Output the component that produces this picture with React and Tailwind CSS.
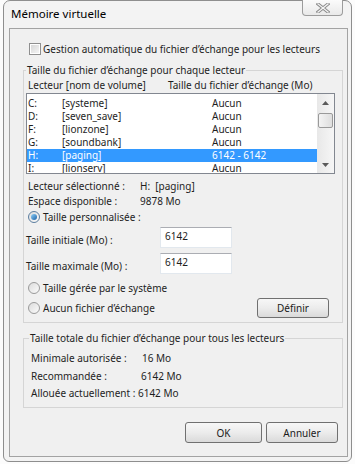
import React from 'react';

const drives = [
    { letter: 'C:', name: '[systeme]', size: 'Aucun' },
    { letter: 'D:', name: '[seven_save]', size: 'Aucun' },
    { letter: 'F:', name: '[lionzone]', size: 'Aucun' },
    { letter: 'G:', name: '[soundbank]', size: 'Aucun' },
    { letter: 'H:', name: '[paging]', size: '6142 - 6142', selected: true },
    { letter: 'I:', name: '[lionserv]', size: 'Aucun' },
];

function CloseButton() {
    return (
        <div className="-mt-[1px] mr-[5px] w-[41px] h-[16px] rounded-b-[4px] border border-t-0 border-[#9c9c9c] bg-gradient-to-b from-[#fbfbfb] to-[#e9e9e9] flex items-center justify-center">
            <svg width="14" height="10" viewBox="0 0 14 10">
                <path d="M2 1 L12 9 M12 1 L2 9" stroke="#8a8a8a" strokeWidth="3.2" strokeLinecap="square" />
                <path d="M2 1 L12 9 M12 1 L2 9" stroke="#f4f4f4" strokeWidth="1.3" strokeLinecap="square" />
            </svg>
        </div>
    );
}

function Checkbox() {
    return (
        <div className="w-[12px] h-[12px] border border-[#8f8f8f] bg-white p-[1px]">
            <div className="w-full h-full bg-gradient-to-br from-[#d8d8d8] to-[#f4f4f4]" />
        </div>
    );
}

function Radio({ checked }) {
    return (
        <div className={`w-[12px] h-[12px] rounded-full border ${checked ? 'border-[#5c7ea0]' : 'border-[#9a9a9a]'} bg-gradient-to-br from-[#dcdcdc] to-[#fbfbfb] flex items-center justify-center`}>
            {checked && <div className="w-[6px] h-[6px] rounded-full bg-gradient-to-br from-[#8fd0f7] to-[#1a63a8]" />}
        </div>
    );
}

function Button({ children, width }) {
    return (
        <div className={`${width} h-full border border-[#707070] rounded-[3px] bg-gradient-to-b from-[#f7f7f7] via-[#ececec] to-[#dadada] flex items-center justify-center text-[#1a1a1a]`}>
            {children}
        </div>
    );
}

function Scrollbar() {
    return (
        <div className="w-[17px] h-full bg-gradient-to-r from-[#e8e8e8] to-[#f6f6f6] flex flex-col items-center">
            <div className="h-[17px] w-full flex items-center justify-center">
                <svg width="7" height="4" viewBox="0 0 7 4"><path d="M0 4 L3.5 0 L7 4 Z" fill="#5a5a5a" /></svg>
            </div>
            <div className="mt-[2px] w-[15px] h-[15px] border border-[#9a9a9a] rounded-[2px] bg-gradient-to-r from-[#f4f4f4] to-[#dedede]" />
            <div className="flex-1" />
            <div className="h-[17px] w-full flex items-center justify-center">
                <svg width="7" height="4" viewBox="0 0 7 4"><path d="M0 0 L7 0 L3.5 4 Z" fill="#5a5a5a" /></svg>
            </div>
        </div>
    );
}

function Field({ label, value }) {
    return (
        <div className="flex items-center h-[21px] pl-[2px]">
            <span className="w-[134px] pt-[5px]">{label}</span>
            <div className="w-[72px] h-[21px] bg-white border border-[#e2e8ee] border-t-[#abadb3] pl-[4px] leading-[16px]">
                {value}
            </div>
        </div>
    );
}

export default function App() {
    return (
        <div className="w-[355px] h-[464px] bg-[#fcfcfc] overflow-hidden font-['Noto_Sans',sans-serif] text-[10px] leading-[14px] text-[#1e1e1e]">
            <div className="ml-[3px] w-[349px] h-[462px] border border-[#8e8e8e] rounded-t-[7px] rounded-b-[6px] bg-[#f3f3f3] pl-[5px] pr-[3px] pb-[4px] flex flex-col">
                {/* title bar */}
                <div className="h-[27px] flex justify-between items-start">
                    <span className="mt-[6px] pl-[2px] text-[11.5px] text-black">Mémoire virtuelle</span>
                    <CloseButton />
                </div>

                {/* client area */}
                <div className="flex-1 border border-[#a3a3a3] bg-[#f0f0f0] flex flex-col">
                    <div className="mt-[13px] ml-[19px] h-[14px] flex items-center gap-[2px]">
                        <Checkbox />
                        <span>Gestion automatique du fichier d’échange pour les lecteurs</span>
                    </div>

                    <fieldset className="mt-[7px] ml-[13px] w-[320px] border border-[#d5d5d5] pb-[4px]">
                        <legend className="ml-[2px] px-[1px]">Taille du fichier d’échange pour chaque lecteur</legend>
                        <div className="mt-[1px] h-[14px] pl-[4px] flex">
                            <span className="w-[140px]">Lecteur [nom de volume]</span>
                            <span>Taille du fichier d’échange (Mo)</span>
                        </div>
                        <div className="mt-[1px] ml-[2px] w-[309px] h-[81px] border border-[#828790] bg-white flex overflow-hidden">
                            <div className="flex-1 pt-[3px]">
                                {drives.map((d) => (
                                    <div key={d.letter} className={`h-[13px] leading-[13px] flex pl-[1px] ${d.selected ? 'bg-[#3399ff] text-white' : ''}`}>
                                        <span className="w-[34px]">{d.letter}</span>
                                        <span className="w-[150px]">{d.name}</span>
                                        <span>{d.size}</span>
                                    </div>
                                ))}
                            </div>
                            <Scrollbar />
                        </div>

                        <div className="mt-[5px] h-[14px] pl-[4px] flex">
                            <span className="w-[112px]">Lecteur sélectionné :</span>
                            <span>H:&nbsp;&nbsp;[paging]</span>
                        </div>
                        <div className="mt-[1px] h-[14px] pl-[4px] flex">
                            <span className="w-[112px]">Espace disponible :</span>
                            <span>9878 Mo</span>
                        </div>
                        <div className="mt-[2px] h-[14px] pl-[4px] flex items-center gap-[3px]">
                            <Radio checked />
                            <span>Taille personnalisée :</span>
                        </div>
                        <div className="mt-[3px]">
                            <Field label="Taille initiale (Mo) :" value="6142" />
                        </div>
                        <div className="mt-[5px]">
                            <Field label="Taille maximale (Mo) :" value="6142" />
                        </div>
                        <div className="mt-[7px] h-[14px] pl-[4px] flex items-center gap-[3px]">
                            <Radio />
                            <span>Taille gérée par le système</span>
                        </div>
                        <div className="mt-[3px] h-[20px] pl-[4px] pr-[13px] flex items-center justify-between">
                            <div className="flex items-center gap-[3px]">
                                <Radio />
                                <span>Aucun fichier d’échange</span>
                            </div>
                            <Button width="w-[72px]">Définir</Button>
                        </div>
                    </fieldset>

                    <fieldset className="mt-[8px] ml-[13px] w-[320px] border border-[#d5d5d5] pb-[7px]">
                        <legend className="ml-[5px] px-[1px]">Taille totale du fichier d’échange pour tous les lecteurs</legend>
                        <div className="mt-[6px] h-[14px] pl-[7px] flex">
                            <span className="w-[111px]">Minimale autorisée :</span>
                            <span>16 Mo</span>
                        </div>
                        <div className="mt-[4px] h-[14px] pl-[7px] flex">
                            <span className="w-[110px]">Recommandée :</span>
                            <span>6142 Mo</span>
                        </div>
                        <div className="mt-[3px] h-[14px] pl-[7px] flex">
                            <span>Allouée actuellement :&nbsp;6142 Mo</span>
                        </div>
                    </fieldset>

                    <div className="mt-[14px] h-[21px] pr-[9px] flex justify-end gap-[4px]">
                        <Button width="w-[77px]">OK</Button>
                        <Button width="w-[72px]">Annuler</Button>
                    </div>
                </div>
            </div>
        </div>
    );
}
